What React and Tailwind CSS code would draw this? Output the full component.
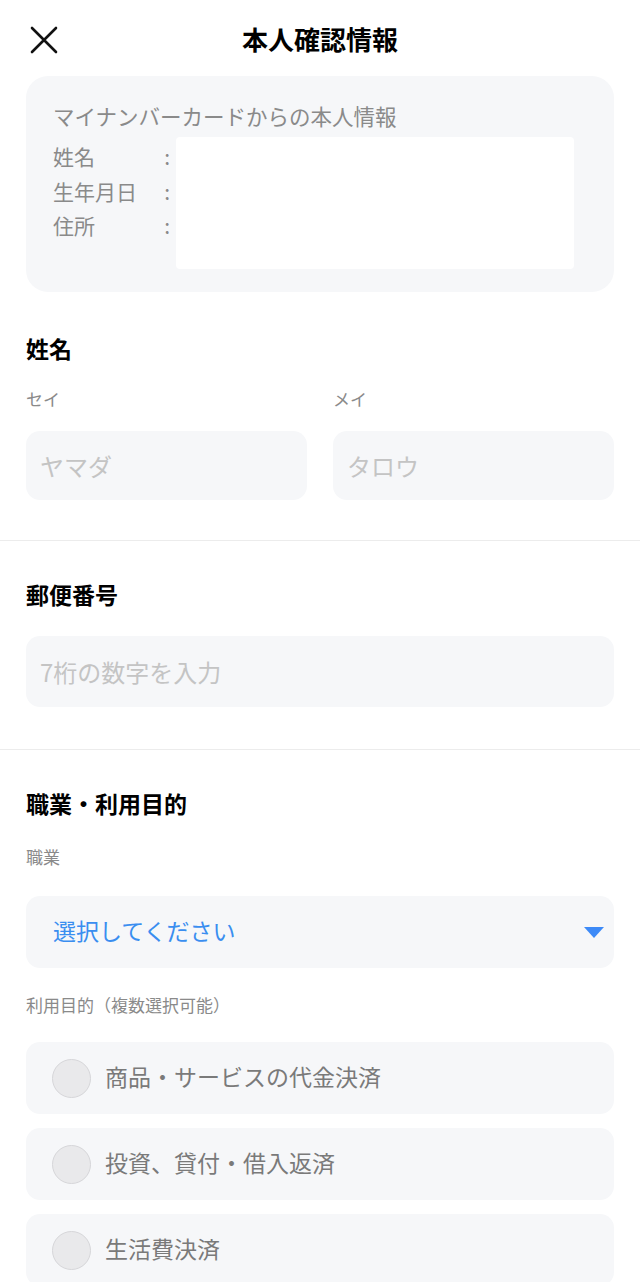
export default function App() {
  const font = { fontFamily: '"Noto Sans CJK JP", "Noto Sans", sans-serif' };
  const purposes = ["商品・サービスの代金決済", "投資、貸付・借入返済", "生活費決済"];

  return (
    <div className="w-[640px] h-[1282px] overflow-hidden bg-white text-black" style={font}>
      {/* header */}
      <div className="relative h-[76px] flex items-center justify-center">
        <button className="absolute left-[29px] top-[25px] w-[30px] h-[30px] flex items-center justify-center">
          <svg width="30" height="30" viewBox="0 0 30 30" fill="none" stroke="#111" strokeWidth="2.6" strokeLinecap="round">
            <path d="M3 3 L27 27 M27 3 L3 27" />
          </svg>
        </button>
        <h1 className="text-[26px] font-bold leading-none mt-[2px]">本人確認情報</h1>
      </div>

      {/* my number card info */}
      <div className="mx-[26px] h-[216px] rounded-[22px] bg-[#f6f7f9] pt-[26px] pl-[27px] pr-[40px]">
        <div className="text-[21.5px] leading-[28px] text-[#8a8a8a]">マイナンバーカードからの本人情報</div>
        <div className="flex mt-[7px]">
          <div className="w-[123px] flex flex-col text-[21px] leading-[34.5px] text-[#8a8a8a] pt-[2px]">
            <div className="flex justify-between pr-[6px]"><span>姓名</span><span>:</span></div>
            <div className="flex justify-between pr-[6px]"><span>生年月日</span><span>:</span></div>
            <div className="flex justify-between pr-[6px]"><span>住所</span><span>:</span></div>
          </div>
          <div className="flex-1 h-[132px] bg-white rounded-[4px]"></div>
        </div>
      </div>

      {/* name */}
      <div className="px-[26px] pt-[41px] pb-[40px] border-b border-[#ececec]">
        <div className="text-[23px] font-bold leading-[30px]">姓名</div>
        <div className="grid grid-cols-2 gap-[26px] mt-[25px]">
          <div>
            <div className="text-[17px] leading-[22px] text-[#8a8a8a]">セイ</div>
            <div className="mt-[21px] h-[69px] rounded-[14px] bg-[#f6f7f9] flex items-center px-[14px] text-[24px] text-[#c4c4c4]">ヤマダ</div>
          </div>
          <div>
            <div className="text-[17px] leading-[22px] text-[#8a8a8a]">メイ</div>
            <div className="mt-[21px] h-[69px] rounded-[14px] bg-[#f6f7f9] flex items-center px-[14px] text-[24px] text-[#c4c4c4]">タロウ</div>
          </div>
        </div>
      </div>

      {/* postal code */}
      <div className="px-[26px] pt-[38px] pb-[42px] border-b border-[#ececec]">
        <div className="text-[23px] font-bold leading-[30px]">郵便番号</div>
        <div className="mt-[27px] h-[71px] rounded-[14px] bg-[#f6f7f9] flex items-center px-[14px] text-[24px] text-[#c4c4c4]">7桁の数字を入力</div>
      </div>

      {/* occupation / purpose */}
      <div className="px-[26px] pt-[38px]">
        <div className="text-[23px] font-bold leading-[30px]">職業・利用目的</div>
        <div className="mt-[28px] text-[17px] leading-[22px] text-[#8a8a8a]">職業</div>
        <div className="mt-[28px] h-[72px] rounded-[14px] bg-[#f6f7f9] flex items-center justify-between pl-[27px] pr-[10px]">
          <span className="text-[23px] text-[#3a8ef0] pb-[3px]">選択してください</span>
          <svg width="20" height="13" viewBox="0 0 20 13">
            <path d="M0 1 H20 L10 12 Z" fill="#3d8af7" />
          </svg>
        </div>
        <div className="mt-[26px] text-[17px] leading-[22px] text-[#8a8a8a]">利用目的（複数選択可能）</div>
        <div className="mt-[26px] flex flex-col gap-[14px]">
          {purposes.map((p) => (
            <div key={p} className="h-[72px] rounded-[14px] bg-[#f6f7f9] flex items-center pl-[26px]">
              <span className="w-[39px] h-[39px] rounded-full bg-[#e9e9eb] border border-[#d6d6d9]"></span>
              <span className="ml-[14px] text-[23px] text-[#7a7a7a] pb-[3px]">{p}</span>
            </div>
          ))}
        </div>
      </div>
    </div>
  );
}
